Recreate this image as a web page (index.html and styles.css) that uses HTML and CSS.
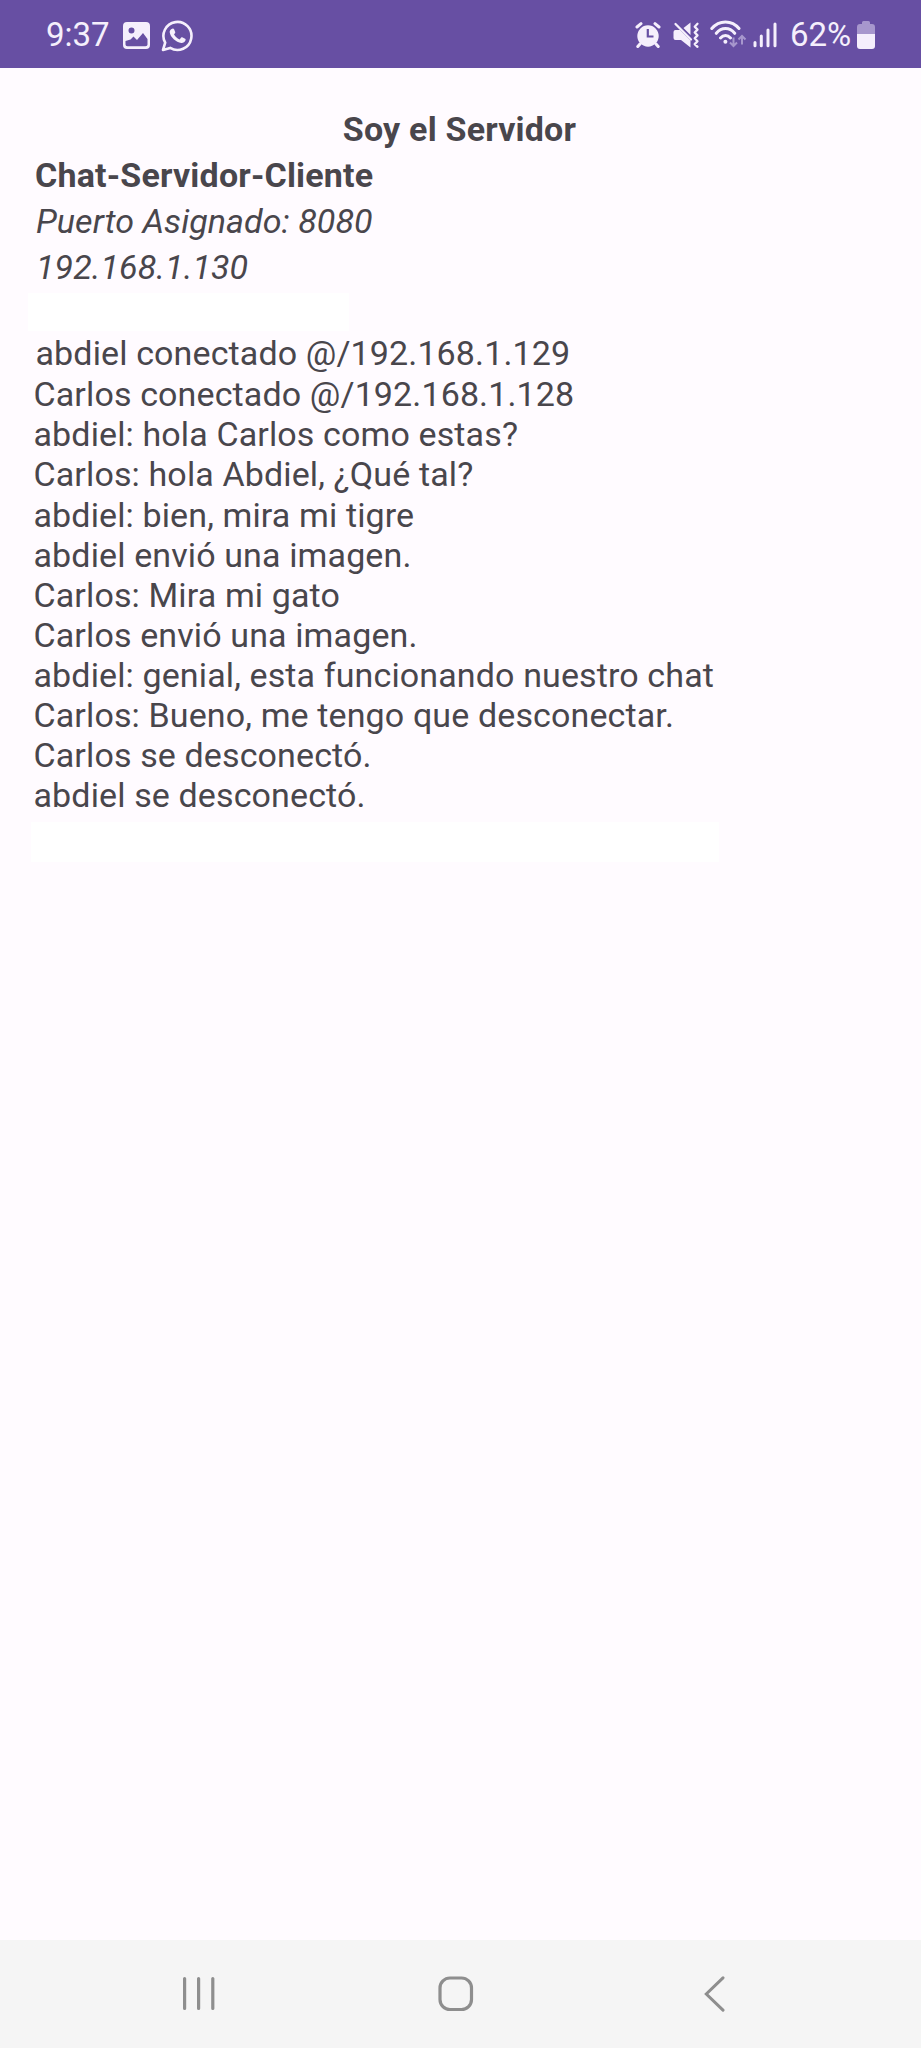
FILE: index.html
```html
<!DOCTYPE html>
<html lang="es">
<head>
<meta charset="utf-8">
<title>Chat-Servidor-Cliente</title>
<link rel="stylesheet" href="styles.css">
</head>
<body>
<div class="screen">
  <header class="status">
    <div class="status-left">
      <span class="clock">9:37</span>
      <svg class="ic-image" width="27" height="27" viewBox="0 0 27 27">
        <path fill="#f5effc" fill-rule="evenodd" d="M4 0H23Q27 0 27 4V23Q27 27 23 27H4Q0 27 0 23V4Q0 0 4 0ZM8.500 5.500A3 3 0 1 0 8.500 11.500A3 3 0 1 0 8.500 5.500ZM2.500 19V22.500Q2.500 24.300 4.500 24.300H22.500Q24.500 24.300 24.500 22.500V17L20 11L14 18L10.500 14.500L7.500 17.500Z"/>
      </svg>
      <svg class="ic-wa" width="32" height="32" viewBox="0 0 32 32">
        <path fill="none" stroke="#f5effc" stroke-width="2.600" stroke-linejoin="round" d="M2 30L4.200 22.700A14 14 0 1 1 9.200 27.900Z"/>
        <path fill="#f5effc" d="M11.300 8.700C12 8.200 12.800 8.600 13.100 9.300L14.200 12C14.500 12.900 13.700 13.500 13 14.300C14.300 16.800 16 18.300 18.600 19.400L20.200 17.600C20.600 17.100 21.100 17.200 21.700 17.500L24.100 18.700C24.800 19.100 24.700 19.800 24.400 20.600C23.800 22.200 22 23.200 20.300 23C15 22.300 9.300 17.200 8.700 12.300C8.500 10.800 9.500 9.200 11.300 8.700Z"/>
      </svg>
    </div>
    <div class="status-right">
      <svg class="ic-alarm" width="26" height="26" viewBox="0 0 26 26">
        <circle cx="13" cy="14" r="10.700" fill="#f5effc"/>
        <path stroke="#f5effc" stroke-width="3" stroke-linecap="round" d="M2 5L6 1.700M24 5L20 1.700M5 22L2.800 24.500M21 22L23.200 24.500"/>
        <path fill="none" stroke="#674fa3" stroke-width="2.200" d="M12.800 7V14.500H18.500"/>
      </svg>
      <svg class="ic-mute" width="27" height="27" viewBox="0 0 27 27">
        <path fill="#f5effc" d="M0.500 10Q0.500 8 2.500 8H7L17.500 18.500V25.500L8 18H2.500Q0.500 18 0.500 16ZM10.500 6L17.500 0.500V13Z"/>
        <path fill="none" stroke="#f5effc" stroke-width="2.300" stroke-linecap="round" stroke-linejoin="round" d="M2.500 2L18 17.500M24.500 1.800L21.700 4.700L24.500 7.600L21.700 10.500L24.500 13.400L21.700 16.300L24.500 19.200L21.700 22.100L24.500 24.800"/>
      </svg>
      <svg class="ic-wifi" width="37" height="28" viewBox="0 0 37 28">
        <g fill="none" stroke="#f5effc" stroke-width="3" stroke-linecap="round">
          <path d="M1.800 8.500C9 -0.300 22 -0.300 29 8.500M6.300 13.300C11.500 7 19.500 7 24.700 13.300M10.500 18C13.500 14.600 17.500 14.600 20.500 18"/>
        </g>
        <circle cx="15.400" cy="21.800" r="2" fill="#f5effc"/>
        <path fill="none" stroke="#a797cd" stroke-width="2" d="M23.500 17.500V26M20 22.500L23.500 26L27 22.500M32 24.500V16M28.500 19.500L32 16L35.500 19.500"/>
      </svg>
      <svg class="ic-signal" width="24" height="26" viewBox="0 0 24 26">
        <path stroke="#f5effc" stroke-width="3" stroke-linecap="round" d="M2 20.500V23.800M8.300 14V23.800M15 8V23.800M22 2V23.800"/>
      </svg>
      <span class="percent">62%</span>
      <svg class="ic-batt" width="18" height="28" viewBox="0 0 18 28">
        <path fill="#a797cd" d="M0 13V6Q0 3 3 3H5V1.500Q5 0 6.500 0H11.500Q13 0 13 1.500V3H15Q18 3 18 6V13Z"/>
        <path fill="#f5effc" d="M0 13H18V25Q18 28 15 28H3Q0 28 0 25Z"/>
      </svg>
    </div>
  </header>

  <main class="content">
    <h1 class="title">Soy el Servidor</h1>
    <h2 class="app-name">Chat-Servidor-Cliente</h2>
    <p class="info">Puerto Asignado: 8080</p>
    <p class="info">192.168.1.130</p>
    <div class="field"></div>
    <div class="log">
      <p class="first">abdiel conectado @/192.168.1.129</p>
      <p>Carlos conectado @/192.168.1.128</p>
      <p>abdiel: hola Carlos como estas?</p>
      <p>Carlos: hola Abdiel, ¿Qué tal?</p>
      <p>abdiel: bien, mira mi tigre</p>
      <p>abdiel envió una imagen.</p>
      <p>Carlos: Mira mi gato</p>
      <p>Carlos envió una imagen.</p>
      <p>abdiel: genial, esta funcionando nuestro chat</p>
      <p>Carlos: Bueno, me tengo que desconectar.</p>
      <p>Carlos se desconectó.</p>
      <p>abdiel se desconectó.</p>
    </div>
    <div class="field wide"></div>
  </main>

  <nav class="navbar">
    <svg class="nav-recents" width="34" height="36" viewBox="0 0 34 36"><path stroke="#8e8e8e" stroke-width="3.200" stroke-linecap="round" d="M2.600 2.600V32.500M16.600 2.600V32.500M30.800 2.600V32.500"/></svg>
    <svg class="nav-home" width="36" height="36" viewBox="0 0 36 36"><rect x="2" y="2" width="31.500" height="31.500" rx="10" fill="none" stroke="#8e8e8e" stroke-width="3.200"/></svg>
    <svg class="nav-back" width="22" height="36" viewBox="0 0 22 36"><path fill="none" stroke="#8e8e8e" stroke-width="3" stroke-linecap="round" d="M19 1.800L2.300 18L19 34.200"/></svg>
  </nav>
</div>
</body>
</html>
```
FILE: styles.css
```css
* {
  box-sizing: border-box;
  margin: 0;
  padding: 0;
}

body {
  font-family: Roboto, "Liberation Sans", sans-serif;
  background: #fffbff;
}

svg {
  display: block;
  flex: none;
}

.screen {
  width: 921px;
  height: 2048px;
  display: flex;
  flex-direction: column;
  overflow: hidden;
  color: #49464c;
}

.status {
  height: 68px;
  flex: none;
  display: flex;
  justify-content: space-between;
  background: #674fa3;
  color: #f5effc;
  font-size: 33px;
  line-height: 40px;
}

.status-left,
.status-right {
  display: flex;
  align-items: flex-start;
}

.clock {
  width: 77px;
  margin: 15px 0 0 46px;
}

.ic-image { margin-top: 22px; }
.ic-wa { margin: 20px 0 0 11px; }
.ic-alarm { margin: 22px 12px 0 0; }
.ic-mute { margin: 22px 10px 0 0; }
.ic-wifi { margin: 20px 6px 0 0; }
.ic-signal { margin: 22px 13px 0 0; }

.percent {
  width: 67px;
  margin-top: 15px;
}

.ic-batt { margin: 21px 46px 0 0; }

.content {
  flex: 1;
  padding: 38px 0 0 35px;
}

.title,
.app-name,
.info {
  font-size: 34px;
  line-height: 46px;
  white-space: nowrap;
}

.title {
  margin-left: -37px;
  text-align: center;
  letter-spacing: 0.2px;
}

.app-name { letter-spacing: 0.19px; }

.info {
  padding-left: 1px;
  font-style: italic;
  letter-spacing: 0.06px;
}

.field {
  width: 321px;
  height: 38px;
  margin: 3px 0 0 -7px;
  background: #ffffff;
}

.wide {
  width: 688px;
  height: 40px;
  margin: 7px 0 0 -4px;
}

.log {
  margin: 2px 0 0 -1.5px;
  font-size: 34px;
  line-height: 40.06px;
  letter-spacing: 0.125px;
  white-space: nowrap;
}

.log .first {
  padding-left: 2px;
  margin-bottom: 1.3px;
}

.navbar {
  height: 108px;
  flex: none;
  display: flex;
  align-items: flex-start;
  padding: 36px 0 0 182px;
  background: #f5f5f5;
}

.nav-home { margin-left: 222px; }
.nav-back { margin-left: 230px; }
```
